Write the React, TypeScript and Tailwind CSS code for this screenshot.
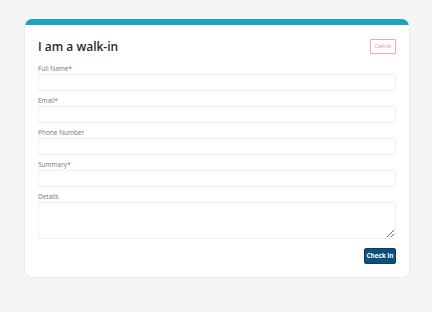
import React from "react";

const Field = ({ label, required, tall }: { label: string; required?: boolean; tall?: boolean }) => (
  <div className="flex flex-col">
    <label className="h-[8px] mb-[1px] text-[6.5px] leading-[8px] text-[#757575]">
      {label}
      {required && <span className="text-[#e05252]">*</span>}
    </label>
    {tall ? (
      <textarea className="h-[37px] w-full border border-[#edf0f4] rounded-[2px] bg-white resize-y outline-none" />
    ) : (
      <input className="h-[17px] w-full border border-[#edf0f4] rounded-[2px] bg-white outline-none" />
    )}
  </div>
);

export default function App() {
  return (
    <div className="w-[432px] h-[312px] bg-[#f5f5f5] pt-[19px] px-[24px]" style={{ fontFamily: '"Open Sans", "Noto Sans", sans-serif' }}>
      <div className="w-[386px] bg-white rounded-[8px] overflow-hidden border border-[#ececec] border-t-0">
        <div className="h-[6px] bg-[#1ba3b9]" />
        <div className="px-[13px] pb-[13px]">
          <div className="flex items-center justify-between h-[29px] mt-[7px] mb-[4px]">
            <h1 className="text-[12px] font-semibold text-[#2b2b2b] leading-none">I am a walk-in</h1>
            <button className="w-[26px] h-[15px] border border-[#f1a9a9] text-[#ef8c8c] text-[5.5px] leading-none rounded-[1px] bg-white">Cancel</button>
          </div>
          <div className="flex flex-col gap-[6px]">
            <Field label="Full Name" required />
            <Field label="Email" required />
            <Field label="Phone Number" />
            <Field label="Summary" required />
            <Field label="Details" tall />
          </div>
          <div className="flex justify-end mt-[9px]">
            <button className="w-[32px] h-[16px] bg-[#0d4f7d] text-white text-[6.5px] font-bold rounded-[2px] leading-none border border-[#0a3e63] tracking-[-0.1px]">Check In</button>
          </div>
        </div>
      </div>
    </div>
  );
}
